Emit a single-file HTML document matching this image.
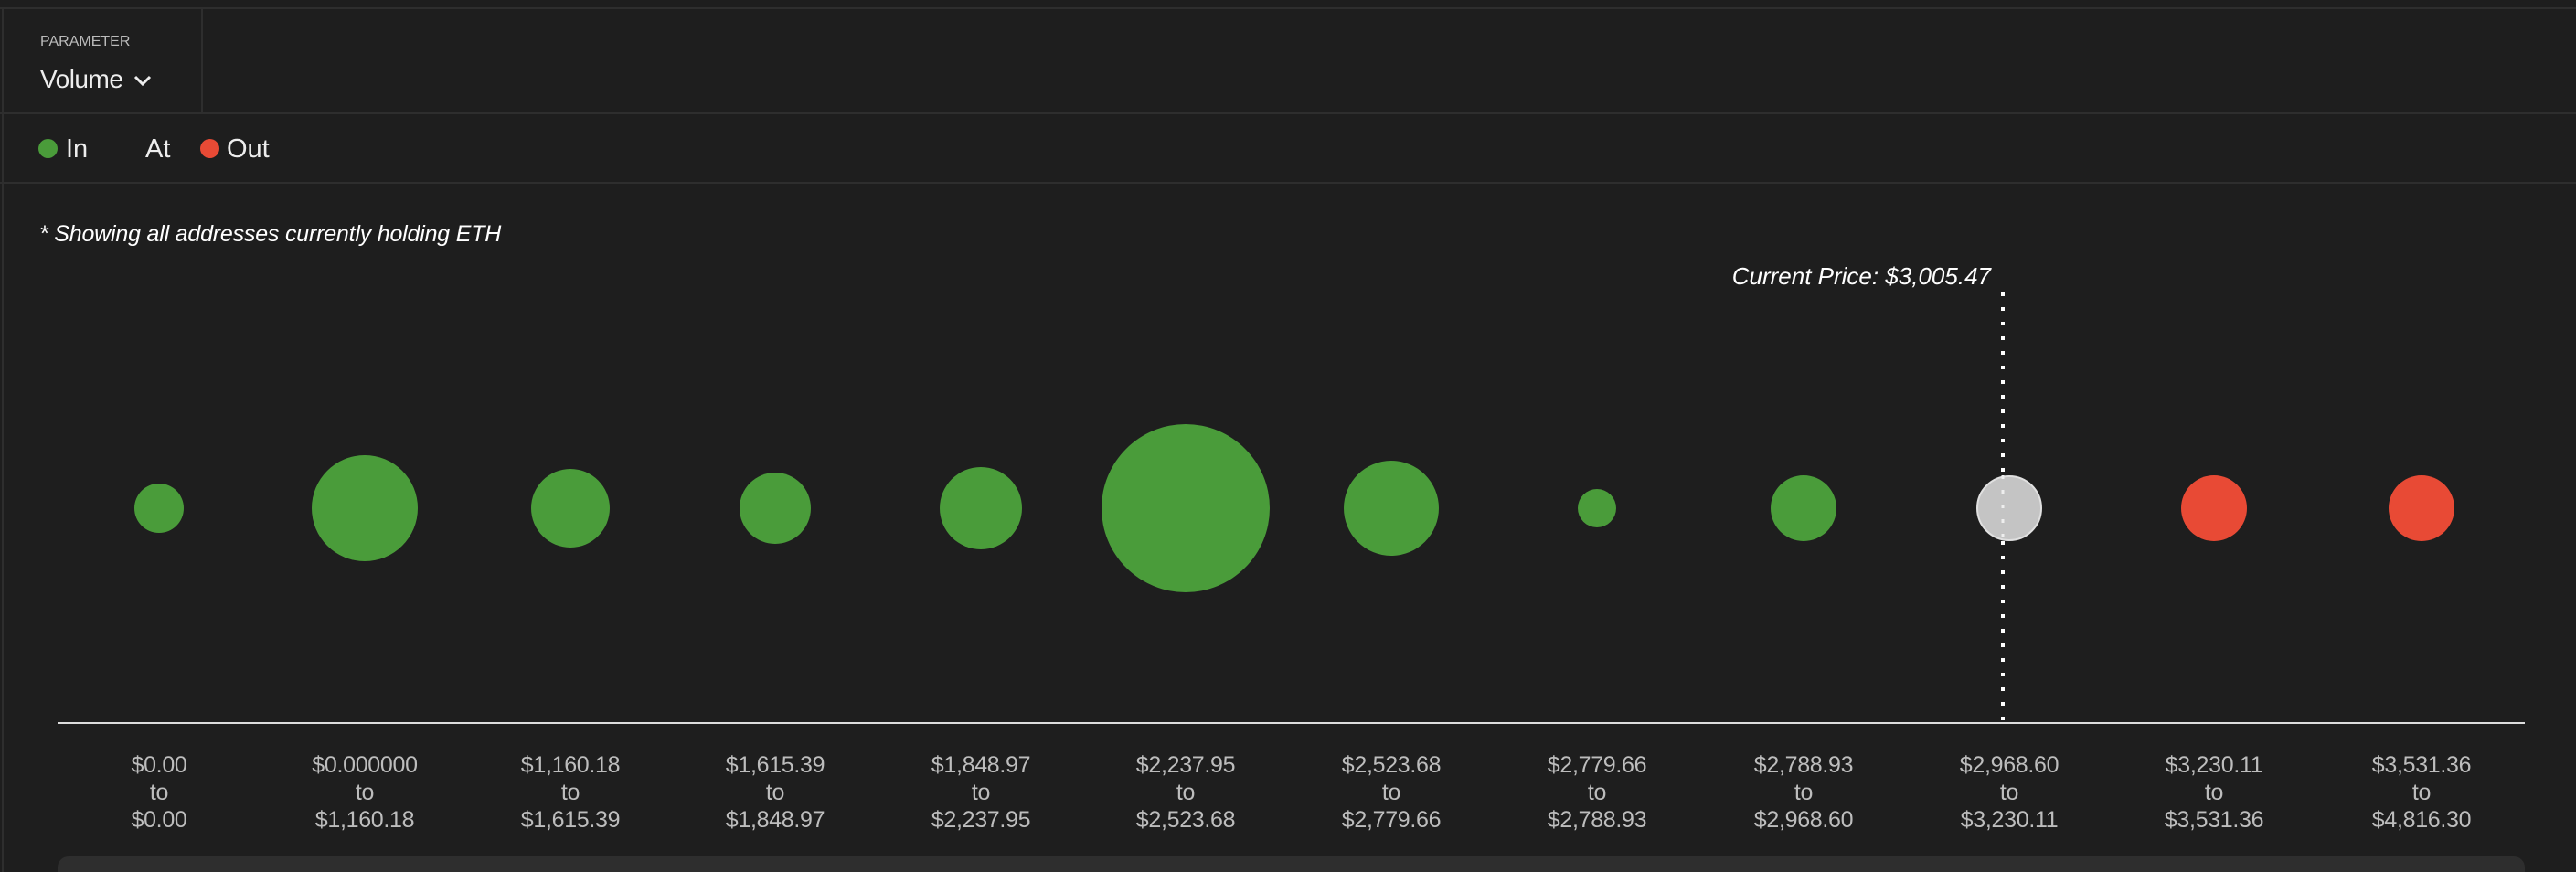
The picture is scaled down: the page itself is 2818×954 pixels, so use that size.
<!DOCTYPE html>
<html><head><meta charset="utf-8"><style>
html,body{margin:0;padding:0;background:#1e1e1e;width:2818px;height:954px;overflow:hidden;font-family:"Liberation Sans",sans-serif;color:#eee;position:relative}
.a{position:absolute}
.lbl{position:absolute;width:220px;text-align:center;color:#bdbdbd;font-size:25px;line-height:30px;top:822px;letter-spacing:-0.3px}
</style></head><body>
<div class="a" style="left:0;top:8px;width:2818px;height:2px;background:#2e2e2e"></div>
<div class="a" style="left:2px;top:8px;width:2px;height:946px;background:#2e2e2e"></div>
<div class="a" style="left:220px;top:10px;width:2px;height:114px;background:#2e2e2e"></div>
<div class="a" style="left:0;top:123px;width:2818px;height:2px;background:#2e2e2e"></div>
<div class="a" style="left:0;top:199px;width:2818px;height:2px;background:#2e2e2e"></div>
<div class="a" style="left:44px;top:37px;font-size:16px;color:#bbb">PARAMETER</div>
<div class="a" style="left:44px;top:71px;font-size:28px;color:#eee;letter-spacing:-0.5px">Volume</div>
<svg class="a" style="left:146px;top:81px" width="20" height="14"><path d="M2 3 L10 11 L18 3" fill="none" stroke="#eee" stroke-width="3"/></svg>
<div class="a" style="left:42px;top:152px;width:21px;height:21px;border-radius:50%;background:#4a9c3a"></div>
<div class="a" style="left:72px;top:147px;font-size:29px">In</div>
<div class="a" style="left:159px;top:147px;font-size:29px">At</div>
<div class="a" style="left:219px;top:152px;width:21px;height:21px;border-radius:50%;background:#e84a35"></div>
<div class="a" style="left:248px;top:147px;font-size:29px">Out</div>
<div class="a" style="left:43px;top:242px;font-size:25px;font-style:italic;color:#fff;letter-spacing:-0.2px">* Showing all addresses currently holding ETH</div>
<div class="a" style="left:1860px;top:287px;width:318px;text-align:right;font-size:26px;font-style:italic;color:#fff">Current Price: $3,005.47</div>
<svg class="a" style="left:0;top:0" width="2818" height="954">
<line x1="2191" y1="320" x2="2191" y2="790" stroke="#fff" stroke-width="4" stroke-dasharray="4 12"/>
<line x1="63" y1="791" x2="2762" y2="791" stroke="#ddd" stroke-width="2"/>
<g fill="#4a9c3a">
<circle cx="174" cy="556" r="27"/><circle cx="399" cy="556" r="58"/><circle cx="624" cy="556" r="43"/><circle cx="848" cy="556" r="39"/><circle cx="1073" cy="556" r="45"/><circle cx="1297" cy="556" r="92"/><circle cx="1522" cy="556" r="52"/><circle cx="1747" cy="556" r="21"/><circle cx="1973" cy="556" r="36"/>
</g>
<circle cx="2198" cy="556" r="35" fill="#c4c4c4" stroke="#e0e0e0" stroke-width="2"/>
<line x1="2191" y1="520" x2="2191" y2="590" stroke="#eee" stroke-width="3" stroke-dasharray="4 12"/>
<circle cx="2422" cy="556" r="36" fill="#e84a35"/><circle cx="2649" cy="556" r="36" fill="#e84a35"/>
<rect x="63" y="937" width="2699" height="30" rx="12" fill="#2e2e2e"/>
</svg>
<div class="lbl" style="left:64px">$0.00<br>to<br>$0.00</div>
<div class="lbl" style="left:289px">$0.000000<br>to<br>$1,160.18</div>
<div class="lbl" style="left:514px">$1,160.18<br>to<br>$1,615.39</div>
<div class="lbl" style="left:738px">$1,615.39<br>to<br>$1,848.97</div>
<div class="lbl" style="left:963px">$1,848.97<br>to<br>$2,237.95</div>
<div class="lbl" style="left:1187px">$2,237.95<br>to<br>$2,523.68</div>
<div class="lbl" style="left:1412px">$2,523.68<br>to<br>$2,779.66</div>
<div class="lbl" style="left:1637px">$2,779.66<br>to<br>$2,788.93</div>
<div class="lbl" style="left:1863px">$2,788.93<br>to<br>$2,968.60</div>
<div class="lbl" style="left:2088px">$2,968.60<br>to<br>$3,230.11</div>
<div class="lbl" style="left:2312px">$3,230.11<br>to<br>$3,531.36</div>
<div class="lbl" style="left:2539px">$3,531.36<br>to<br>$4,816.30</div>
</body></html>
